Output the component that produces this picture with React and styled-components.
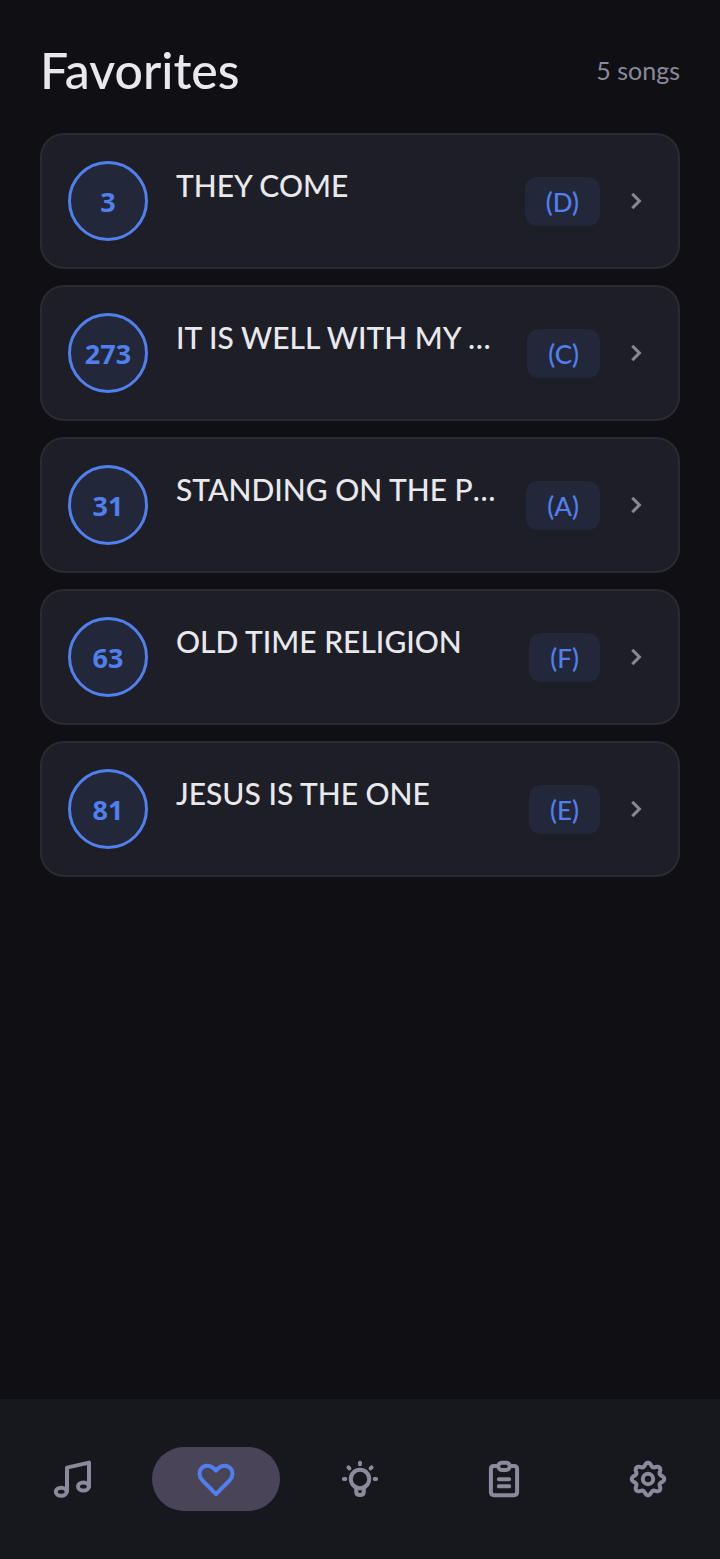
import React, { useState } from 'react';
import styled, { createGlobalStyle } from 'styled-components';

const GlobalStyle = createGlobalStyle`
	* {
		box-sizing: border-box;
	}

	body {
		margin: 0;
		background: #100f14;
		color: #e8e8ed;
		font-family: Lato, "Noto Sans", sans-serif;
	}

	button {
		font: inherit;
		color: inherit;
		border: none;
		background: none;
		padding: 0;
		cursor: pointer;
	}
`;

const Screen = styled.div`
	display: flex;
	flex-direction: column;
	min-height: 100vh;
`;

const Main = styled.main`
	flex: 1;
	padding: 38px 40px 24px;
`;

const Header = styled.header`
	display: flex;
	align-items: center;
	justify-content: space-between;
	height: 64px;
	margin-bottom: 31px;
`;

const Heading = styled.h1`
	margin: 0;
	font-size: 50px;
	line-height: 64px;
	font-weight: 500;
`;

const Count = styled.span`
	font-size: 25px;
	line-height: 32px;
	color: #8a8a9d;
`;

const SongList = styled.ul`
	display: flex;
	flex-direction: column;
	gap: 16px;
	margin: 0;
	padding: 0;
	list-style: none;
`;

const SongCard = styled.button`
	display: flex;
	align-items: center;
	width: 100%;
	padding: 26px;
	text-align: left;
	background: #1e1e27;
	border: 2px solid #2a2a32;
	border-radius: 24px;
`;

const SongNumber = styled.span`
	display: flex;
	flex: none;
	align-items: center;
	justify-content: center;
	width: 80px;
	height: 80px;
	margin-right: 28px;
	border: 3px solid #5180ee;
	border-radius: 50%;
	background: #23273a;
	color: #5180ee;
	font-family: "Open Sans", sans-serif;
	font-size: 27px;
	font-weight: 700;
`;

const SongInfo = styled.span`
	flex: 1;
	min-width: 0;
	height: 72px;
`;

const SongTitle = styled.span`
	display: block;
	font-size: 30px;
	line-height: 40px;
	font-weight: 500;
	white-space: nowrap;
	overflow: hidden;
	text-overflow: ellipsis;
`;

const SongKey = styled.span`
	flex: none;
	margin: 0 20px 0 24px;
	padding: 9px 21px 8px;
	border-radius: 12px;
	background: #23273a;
	color: #5180ee;
	font-size: 26px;
	line-height: 32px;
	font-weight: 500;
`;

const Chevron = styled.svg`
	flex: none;
	width: 32px;
	height: 32px;
	fill: #8a8a9d;
	stroke: #8a8a9d;
	stroke-width: 0.3;
`;

const TabBar = styled.nav`
	display: grid;
	grid-template-columns: repeat(5, 1fr);
	place-items: center;
	height: 160px;
	background: #17181d;
`;

const Tab = styled.button`
	display: flex;
	align-items: center;
	justify-content: center;
	width: 128px;
	max-width: 100%;
	height: 64px;
	border-radius: 32px;

	&& {
		background: ${props => props.$active ? '#4a4458' : 'transparent'};
		color: ${props => props.$active ? '#5180ee' : '#8a8a9d'};
	}
`;

const Icon = styled.svg`
	width: 48px;
	height: 48px;
	fill: none;
	stroke: currentColor;
	stroke-width: 4;
	stroke-linecap: round;
	stroke-linejoin: round;
`;

const songs = [
	{ number: 3, title: 'THEY COME', songKey: '(D)' },
	{ number: 273, title: 'IT IS WELL WITH MY SOUL', songKey: '(C)' },
	{ number: 31, title: 'STANDING ON THE PROMISES', songKey: '(A)' },
	{ number: 63, title: 'OLD TIME RELIGION', songKey: '(F)' },
	{ number: 81, title: 'JESUS IS THE ONE', songKey: '(E)' },
];

// eight rounded teeth around the centre of a 48px box
const gearPath = () => {
	const points = [];
	for (let i = 0; i < 240; i++) {
		const angle = (i / 240) * Math.PI * 2;
		const radius = 14.5 + 1.8 * Math.cos(8 * angle) - 0.04 * Math.cos(24 * angle);
		points.push(`${(24 + radius * Math.cos(angle)).toFixed(2)} ${(24 + radius * Math.sin(angle)).toFixed(2)}`);
	}
	return `M${points.join('L')}Z`;
};

const tabs = [
	{
		name: 'Songs',
		icon: (
			<>
				<path d="M19 36.5V12.6L41 7.6V31.5" />
				<ellipse cx="13.2" cy="36.7" rx="5.4" ry="4" />
				<ellipse cx="35.4" cy="31.5" rx="5.4" ry="4" />
			</>
		),
	},
	{
		name: 'Favorites',
		icon: <path d="M24 39.2L10.6 25.7C6.6 21.6 6.7 16.3 9.6 13.2C12.9 9.8 18.3 10 21.4 13L24 15.6L26.6 13C29.7 10 35.1 9.8 38.4 13.2C41.3 16.3 41.4 21.6 37.4 25.7Z" />,
	},
	{
		name: 'Ideas',
		icon: (
			<>
				<circle cx="24" cy="24" r="9.2" />
				<path d="M20.2 33V36.4C20.2 38.8 21.6 40 24 40C26.4 40 27.8 38.8 27.8 36.4V33" />
				<path d="M24 7.8V9.2M7.9 24H9.3M38.7 24H40.1M12.4 12.4L13.4 13.4M35.6 12.4L34.6 13.4" />
			</>
		),
	},
	{
		name: 'Lists',
		icon: (
			<>
				<path d="M18 10.9H14Q10.9 10.9 10.9 14V37.1Q10.9 40.2 14 40.2H34Q37.1 40.2 37.1 37.1V14Q37.1 10.9 34 10.9H30" />
				<rect x="18.2" y="7.7" width="11.6" height="7.2" rx="3.6" />
				<path d="M18.8 24.2H29.2M18.8 31.2H29.2" />
			</>
		),
	},
	{
		name: 'Settings',
		icon: (
			<>
				<path d={gearPath()} />
				<circle cx="24" cy="24" r="5.2" />
			</>
		),
	},
];

const Song = ({ number, title, songKey }) => (
	<li>
		<SongCard type="button">
			<SongNumber>{number}</SongNumber>
			<SongInfo>
				<SongTitle>{title}</SongTitle>
			</SongInfo>
			<SongKey>{songKey}</SongKey>
			<Chevron viewBox="0 0 24 24" aria-hidden="true">
				<path d="M10 6L8.59 7.41 13.17 12l-4.58 4.59L10 18l6-6z" />
			</Chevron>
		</SongCard>
	</li>
);

const App = () => {
	const [active, setActive] = useState('Favorites');

	return (
		<Screen>
			<GlobalStyle />
			<Main>
				<Header>
					<Heading>Favorites</Heading>
					<Count>{songs.length} songs</Count>
				</Header>
				<SongList>
					{songs.map(song => <Song key={song.number} {...song} />)}
				</SongList>
			</Main>
			<TabBar>
				{tabs.map(({ name, icon }) => (
					<Tab
						key={name}
						type="button"
						aria-label={name}
						$active={name === active}
						onClick={() => setActive(name)}>
						<Icon viewBox="0 0 48 48" aria-hidden="true">{icon}</Icon>
					</Tab>
				))}
			</TabBar>
		</Screen>
	);
};

export default App;
